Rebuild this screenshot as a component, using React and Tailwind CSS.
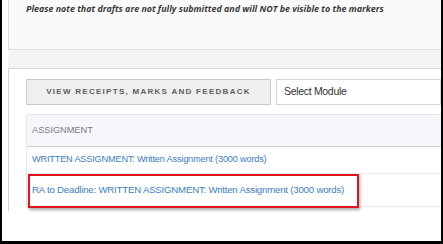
export default function App() {
  return (
    <div className="h-[244px] w-[443px] overflow-hidden bg-black pb-[3px] pl-[2px] pr-[2px]">
      <div className="h-full w-full overflow-hidden bg-white pl-[6px]">
        {/* NOTICE PANEL */}
        <div className="h-[50px] border-b border-l border-[#dcdcdc] bg-[#fafafa] pl-[17px] pt-[2px]">
          <p className="whitespace-nowrap text-[8.9px] font-bold italic text-[#3a3a3a]" style={{ fontFamily: '"Open Sans", sans-serif' }}>
            Please note that drafts are not fully submitted and will NOT be visible to the markers
          </p>
        </div>

        <div className="h-[18px] bg-[#f4f4f4]" />

        {/* RECEIPTS PANEL */}
        <div className="h-[143px] border-l border-t border-[#d6d6d6] bg-white pl-[17px] pt-[10px]" style={{ fontFamily: '"Liberation Sans", Arial, sans-serif' }}>
          <div className="flex gap-[5px]">
            <button className="h-[26px] w-[245px] shrink-0 border border-[#c9c9c9] bg-[#efefef] text-[8px] font-semibold tracking-[0.16em] text-[#606060]">
              VIEW RECEIPTS, MARKS AND FEEDBACK
            </button>
            <div className="flex h-[26px] flex-1 items-center border border-[#d6d6d6] bg-white pl-[7px] text-[10.5px] tracking-[-0.03em] text-[#333]">
              Select Module
            </div>
          </div>

          <div className="mt-[9px] border-l border-t border-[#e6e6ee]">
            <div className="flex h-[32px] items-center border-b border-[#cfcfcf] bg-[#f6f6fb] pl-[5px] text-[9.2px] text-[#7a7a7a]">
              ASSIGNMENT
            </div>
            <div className="flex h-[27px] items-center border-b border-[#ececec] pl-[5px] text-[9.2px] tracking-[-0.02em] text-[#3c7dbd]">
              WRITTEN ASSIGNMENT: Written Assignment (3000 words)
            </div>
            <div className="relative flex h-[33px] items-center border-b border-[#ececec] pl-[5px] text-[9.65px] tracking-[-0.02em] text-[#3c7dbd]">
              RA to Deadline: WRITTEN ASSIGNMENT: Written Assignment (3000 words)
              <div className="absolute left-[1px] top-0 h-[34px] w-[331px] border-2 border-[#e0141c] shadow-[1px_2px_3px_rgba(0,0,0,0.35)]" />
            </div>
          </div>
        </div>
      </div>
    </div>
  );
}
